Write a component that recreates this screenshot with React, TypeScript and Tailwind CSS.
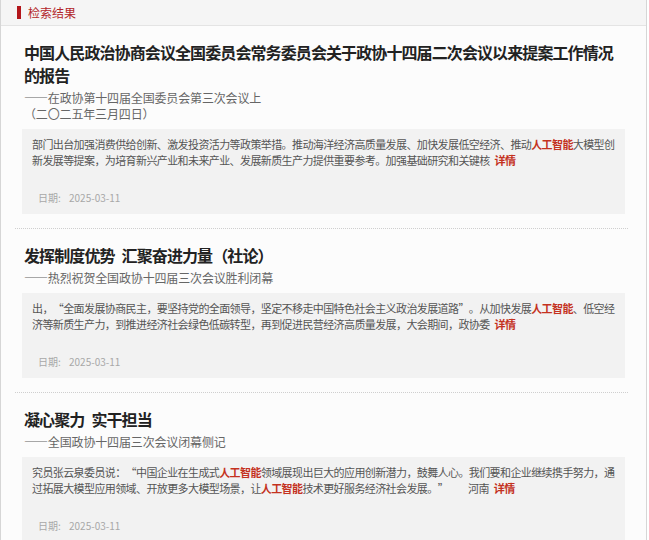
import * as React from 'react';

type Seg = { t: string; hl?: boolean };

interface Result {
  title: React.ReactNode[];
  subtitle: string[];
  lines: Seg[][];
  tail?: string;
  date: string;
}

const Gap = () => <span className="inline-block w-[7px]" />;

// curly quotes take a full CJK cell, as in the original page
const withQuotes = (t: string) =>
  t.split(/([“”])/).map((p, i) => {
    if (p === '“') return <span key={i} className="inline-block w-[10.4px] text-right">“</span>;
    if (p === '”') return <span key={i} className="inline-block w-[10.4px] text-left">”</span>;
    return <React.Fragment key={i}>{p}</React.Fragment>;
  });

const results: Result[] = [
  {
    title: [
      '中国人民政治协商会议全国委员会常务委员会关于政协十四届二次会议以来提案工作情况',
      '的报告',
    ],
    subtitle: ['——在政协第十四届全国委员会第三次会议上', '（二〇二五年三月四日）'],
    lines: [
      [
        { t: '部门出台加强消费供给创新、激发投资活力等政策举措。推动海洋经济高质量发展、加快发展低空经济、推动' },
        { t: '人工智能', hl: true },
        { t: '大模型创' },
      ],
      [{ t: '新发展等提案，为培育新兴产业和未来产业、发展新质生产力提供重要参考。加强基础研究和关键核' }],
    ],
    date: '2025-03-11',
  },
  {
    title: [
      <>
        发挥制度优势
        <Gap />
        汇聚奋进力量（社论）
      </>,
    ],
    subtitle: ['——热烈祝贺全国政协十四届三次会议胜利闭幕'],
    lines: [
      [
        { t: '出，“全面发展协商民主，要坚持党的全面领导，坚定不移走中国特色社会主义政治发展道路”。从加快发展' },
        { t: '人工智能', hl: true },
        { t: '、低空经' },
      ],
      [{ t: '济等新质生产力，到推进经济社会绿色低碳转型，再到促进民营经济高质量发展，大会期间，政协委' }],
    ],
    date: '2025-03-11',
  },
  {
    title: [
      <>
        凝心聚力
        <Gap />
        实干担当
      </>,
    ],
    subtitle: ['——全国政协十四届三次会议闭幕侧记'],
    lines: [
      [
        { t: '究员张云泉委员说：“中国企业在生成式' },
        { t: '人工智能', hl: true },
        { t: '领域展现出巨大的应用创新潜力，鼓舞人心。我们要和企业继续携手努力，通' },
      ],
      [
        { t: '过拓展大模型应用领域、开放更多大模型场景，让' },
        { t: '人工智能', hl: true },
        { t: '技术更好服务经济社会发展。”' },
      ],
    ],
    tail: '河南',
    date: '2025-03-11',
  },
];

const ResultItem: React.FC<{ item: Result }> = ({ item }) => {
  return (
    <div className="border-b border-dotted border-[#cfcfcf] pt-[15px] pb-[14px]">
      <div className="pl-[9px] text-[16px] leading-[23px] tracking-[-0.9px] font-bold text-[#222]">
        {item.title.map((line, i) => (
          <div key={i} className="whitespace-nowrap">{line}</div>
        ))}
      </div>
      <div className="mt-[3px] pl-[9px] text-[12px] leading-[16px] tracking-[-0.15px] text-[#666] [font-feature-settings:'fwid']">
        {item.subtitle.map((line, i) => (
          <div key={i} className="whitespace-nowrap">{line}</div>
        ))}
      </div>
      <div className="mt-[7px] ml-[7px] mr-[3px] bg-[#f2f2f2] pt-[7px] px-[10px] pb-[9px] overflow-hidden">
        <div className="text-[11px] leading-[16px] tracking-[-0.6px] text-[#555]">
          {item.lines.map((line, i) => (
            <div key={i} className="whitespace-nowrap">
              {line.map((s, j) =>
                s.hl ? (
                  <span key={j} className="text-[#c4321f] font-bold">{s.t}</span>
                ) : (
                  <span key={j}>{withQuotes(s.t)}</span>
                )
              )}
              {i === item.lines.length - 1 && item.tail && (
                <span className="ml-[20px]">{item.tail}</span>
              )}
              {i === item.lines.length - 1 && (
                <span className="ml-[5px] text-[#c4321f] font-bold">详情</span>
              )}
            </div>
          ))}
        </div>
        <div className="mt-[22px] pl-[6px] flex text-[10px] leading-[15px] text-[#a8a8a8]">
          <span className="w-[31px]">日期:</span>
          <span>{item.date}</span>
        </div>
      </div>
    </div>
  );
};

export default function App() {
  return (
    <div
      className="w-[649px] h-[540px] overflow-hidden bg-white"
      style={{ fontFamily: '"Noto Sans CJK SC", "Noto Sans", sans-serif' }}
    >
      <div className="w-[647px] min-h-[540px] border-l border-r border-[#d6d6d6] bg-[#fcfcfc]">
        <div className="h-[26px] flex items-center pl-[16px] bg-[#f5f5f5] border-b border-[#e4e4e4]">
          <span className="w-[4px] h-[13px] bg-[#b3161b] mr-[7px]" />
          <span className="text-[12px] text-[#b3262a]">检索结果</span>
        </div>
        <div className="pl-[14px] pr-[18px]">
          {results.map((r, i) => (
            <ResultItem key={i} item={r} />
          ))}
        </div>
      </div>
    </div>
  );
}
